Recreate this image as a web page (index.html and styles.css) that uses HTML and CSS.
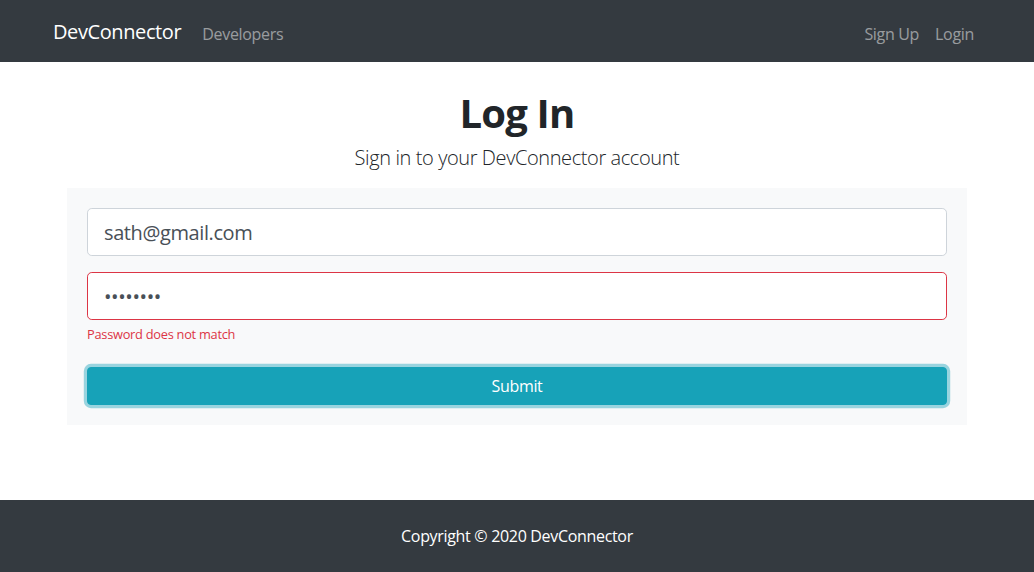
FILE: index.html
```html
<!DOCTYPE html>
<html lang="en">
<head>
<meta charset="utf-8">
<title>DevConnector</title>
<link rel="stylesheet" href="styles.css">
</head>
<body>
<nav class="navbar">
  <div class="nav-left">
    <a class="brand" href="#">DevConnector</a>
    <a class="nav-link" href="#">Developers</a>
  </div>
  <div class="nav-right">
    <a class="nav-link" href="#">Sign Up</a>
    <a class="nav-link" href="#">Login</a>
  </div>
</nav>
<main class="main">
  <h1 class="title">Log In</h1>
  <p class="lead">Sign in to your DevConnector account</p>
  <form class="form-box">
    <div class="form-group">
      <input class="form-control" type="email" value="sath@gmail.com">
    </div>
    <div class="form-group">
      <input class="form-control invalid" type="password" value="password">
      <div class="feedback">Password does not match</div>
    </div>
    <button class="btn" type="button">Submit</button>
  </form>
</main>
<footer class="footer">Copyright © 2020 DevConnector</footer>
</body>
</html>
```
FILE: styles.css
```css
* { box-sizing: border-box; letter-spacing: -0.02em; }
html, body { height: 100%; }
body {
  margin: 0;
  font-family: "Open Sans", "Noto Sans", sans-serif;
  font-size: 16px;
  color: #212529;
  background: #fff;
  display: flex;
  flex-direction: column;
  min-height: 100vh;
}
a { text-decoration: none; }
.navbar {
  height: 62px;
  background: #343a40;
  display: flex;
  align-items: center;
  justify-content: space-between;
  padding: 0 60px 0 53px;
}
.nav-left, .nav-right { display: flex; align-items: center; }
.brand {
  color: #fff;
  font-size: 20px;
  margin-right: 21px;
}
.nav-link {
  color: rgba(255,255,255,.5);
  font-size: 16px;
  padding: 5px 8px 0;
}
.nav-left .nav-link { padding-left: 0; }
.nav-right .nav-link:last-child { padding-right: 0; }
.main {
  display: flex;
  flex-direction: column;
  align-items: center;
}
.title {
  margin: 27px 0 0;
  font-size: 40px;
  line-height: 48px;
  font-weight: 700;
  color: #212529;
}
.lead {
  margin: 6px 0 0;
  font-size: 20px;
  line-height: 30px;
  font-weight: 300;
  color: #212529;
}
.form-box {
  margin-top: 15px;
  width: 900px;
  background: #f8f9fa;
  padding: 20px;
}
.form-group { margin-bottom: 16px; }
.form-control {
  display: block;
  width: 100%;
  height: 48px;
  padding: 8px 16px;
  font-family: inherit;
  font-size: 20px;
  color: #495057;
  background: #fff;
  border: 1px solid #ced4da;
  border-radius: 4.8px;
  outline: none;
}
.form-control.invalid { border-color: #dc3545; }
.feedback {
  margin-top: 5px;
  font-size: 12.8px;
  line-height: 19px;
  color: #dc3545;
}
.form-group:nth-child(2) { margin-bottom: 23px; }
.btn {
  display: block;
  width: 100%;
  height: 38px;
  font-family: inherit;
  font-size: 16px;
  color: #fff;
  background: #17a2b8;
  border: 1px solid #17a2b8;
  border-radius: 4px;
  box-shadow: 0 0 0 3.2px rgba(58,176,195,.5);
  cursor: pointer;
}
.footer {
  margin-top: auto;
  height: 72px;
  background: #343a40;
  color: #fff;
  font-size: 16px;
  display: flex;
  align-items: center;
  justify-content: center;
}
```
